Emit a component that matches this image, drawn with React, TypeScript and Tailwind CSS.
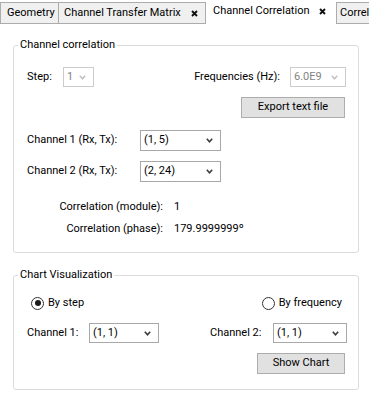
import type { ReactNode } from "react";

function Chevron({ disabled }: { disabled?: boolean }) {
  return (
    <svg width="7" height="5" viewBox="0 0 7 5">
      <path
        d="M0.8 0.8 L3.5 3.8 L6.2 0.8"
        fill="none"
        stroke={disabled ? "#c2c2c2" : "#3c3c3c"}
        strokeWidth="1.6"
      />
    </svg>
  );
}

function CloseMark() {
  return (
    <svg width="7" height="7" viewBox="0 0 7 7">
      <path d="M1 1 L6 6 M6 1 L1 6" stroke="#111" strokeWidth="1.9" />
    </svg>
  );
}

function Combo({
  value,
  className,
  disabled,
}: {
  value: string;
  className: string;
  disabled?: boolean;
}) {
  return (
    <div
      className={
        "flex h-[20px] items-center justify-between bg-white pl-[3px] pr-[7px] " +
        (disabled
          ? "border border-[#cccccc] text-[#838383] "
          : "border border-[#a8a8a8] text-black ") +
        className
      }
    >
      <span>{value}</span>
      <Chevron disabled={disabled} />
    </div>
  );
}

function Button({ children, className }: { children: ReactNode; className: string }) {
  return (
    <button
      className={
        "flex h-[21px] items-center justify-center border border-[#adadad] bg-[#e1e1e1] " +
        className
      }
    >
      {children}
    </button>
  );
}

function Radio({ label, checked }: { label: string; checked?: boolean }) {
  return (
    <label className="flex items-center gap-[4px]">
      <span className="flex h-[13px] w-[13px] items-center justify-center rounded-full border border-[#333333] bg-white">
        {checked && <span className="h-[6px] w-[6px] rounded-full bg-[#1a1a1a]" />}
      </span>
      <span>{label}</span>
    </label>
  );
}

export default function App() {
  return (
    <div className="h-[403px] w-[369px] overflow-hidden bg-white font-['Roboto',sans-serif] text-[11px] text-black">
      <div className="flex h-[24px] items-end">
        <div className="flex h-[22px] w-[59px] shrink-0 items-center border border-[#acacac] bg-[#f0f0f0] pl-[6px]">
          Geometry
        </div>
        <div className="flex h-[22px] w-[147px] shrink-0 items-center justify-between border-y border-r border-[#acacac] bg-[#f0f0f0] pl-[5px] pr-[7px]">
          <span>Channel Transfer Matrix</span>
          <CloseMark />
        </div>
        <div className="flex h-[24px] w-[130px] shrink-0 items-center justify-between bg-white pb-[2px] pl-[7px] pr-[10px]">
          <span>Channel Correlation</span>
          <CloseMark />
        </div>
        <div className="flex h-[22px] flex-1 items-center overflow-hidden whitespace-nowrap border-y border-l border-[#acacac] bg-[#f0f0f0] pl-[3px]">
          Correl
        </div>
      </div>

      <fieldset className="ml-[13px] mt-[14px] w-[346px] rounded-[3px] border border-[#dcdcdc] pb-[13px] pl-[13px] pr-[12px]">
        <legend className="-ml-[9px] px-[2px] leading-[14px]">Channel correlation</legend>
        <div className="mt-[15px] flex h-[20px] items-center">
          <span className="w-[36px]">Step:</span>
          <Combo value="1" disabled className="w-[31px]" />
          <span className="ml-auto">Frequencies (Hz):</span>
          <Combo value="6.0E9" disabled className="ml-[10px] w-[56px]" />
        </div>
        <div className="mt-[10px] flex justify-end">
          <Button className="mr-[1px] w-[104px]">Export text file</Button>
        </div>
        <div className="mt-[12px] flex h-[21px] items-center">
          <span className="w-[113px]">Channel 1 (Rx, Tx):</span>
          <Combo value="(1, 5)" className="h-[21px] w-[81px]" />
        </div>
        <div className="mt-[10px] flex h-[21px] items-center">
          <span className="w-[113px]">Channel 2 (Rx, Tx):</span>
          <Combo value="(2, 24)" className="h-[21px] w-[81px]" />
        </div>
        <div className="mt-[15px] grid grid-cols-[136px_1fr] gap-x-[11px] gap-y-[2px]">
          <span className="flex h-[20px] items-center justify-end">Correlation (module):</span>
          <span className="flex h-[20px] items-center">1</span>
          <span className="flex h-[20px] items-center justify-end">Correlation (phase):</span>
          <span className="flex h-[20px] items-center">179.9999999º</span>
        </div>
      </fieldset>

      <fieldset className="ml-[13px] mt-[15px] w-[346px] rounded-[3px] border border-[#dcdcdc] pb-[15px] pl-[13px] pr-[12px]">
        <legend className="-ml-[9px] px-[2px] leading-[14px]">Chart Visualization</legend>
        <div className="mt-[14px] flex h-[14px] items-center justify-between pl-[4px] pr-[4px]">
          <Radio label="By step" checked />
          <Radio label="By frequency" />
        </div>
        <div className="mt-[13px] flex h-[20px] items-center">
          <span className="w-[62px]">Channel 1:</span>
          <Combo value="(1, 1)" className="w-[70px]" />
          <span className="ml-auto w-[63px]">Channel 2:</span>
          <Combo value="(1, 1)" className="mr-[-1px] w-[74px]" />
        </div>
        <div className="mt-[10px] flex justify-end">
          <Button className="mr-[1px] w-[88px]">Show Chart</Button>
        </div>
      </fieldset>
    </div>
  );
}
